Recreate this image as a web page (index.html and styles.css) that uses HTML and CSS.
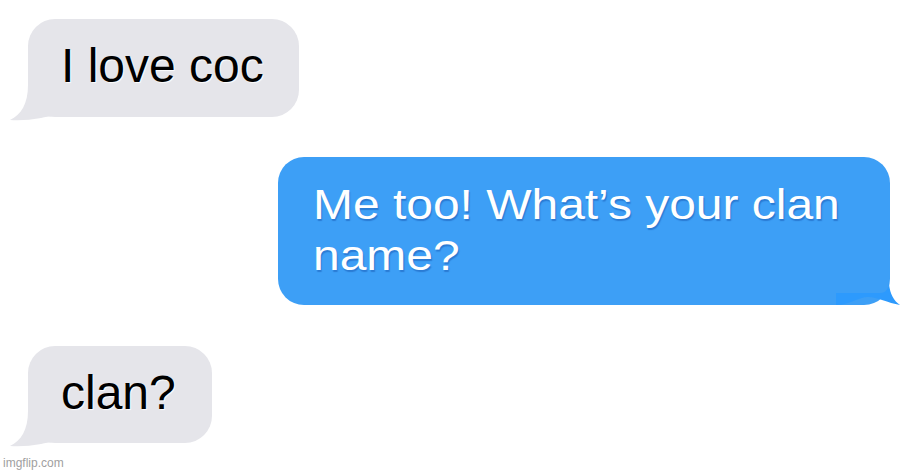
FILE: index.html
```html
<!DOCTYPE html>
<html>
<head>
<meta charset="utf-8">
<link rel="stylesheet" href="styles.css">
</head>
<body>
<div class="chat">
  <div class="bubble gray first">
    <span class="gtext">I love coc</span>
    <svg class="tail-left" width="55" height="42" viewBox="0 0 55 42"><path d="M23 5 C23 24 16 35 5 40 Q20 41 36 38 C40 37 44 36 50 36 L55 36 L55 5 Z" fill="#e5e5ea"/></svg>
  </div>
  <div class="bubble blue">
    <span class="btext">Me too! What’s your clan name?</span>
    <svg class="tail-right" width="70" height="40" viewBox="0 0 70 40"><path d="M6 35 L6 23 L50 23 Q59 23 59 10 L59 14 C60 24 64 31 70 35 C58 33 47 27 38 27 C29 27 19 35 6 35 Z" fill="#2d9afd"/></svg>
  </div>
  <div class="bubble gray third">
    <span class="gtext">clan?</span>
    <svg class="tail-left" width="55" height="42" viewBox="0 0 55 42"><path d="M23 5 C23 24 16 35 5 40 Q20 41 36 38 C40 37 44 36 50 36 L55 36 L55 5 Z" fill="#e5e5ea"/></svg>
  </div>
</div>
<div class="watermark">imgflip.com</div>
</body>
</html>
```

FILE: styles.css
```css
html, body {
  margin: 0;
  padding: 0;
  background: #ffffff;
}
body {
  width: 900px;
  height: 475px;
  position: relative;
  overflow: hidden;
  font-family: "Liberation Sans", Arial, sans-serif;
}
.chat {
  display: flex;
  flex-direction: column;
  align-items: flex-start;
  padding-top: 19px;
}
.bubble {
  position: relative;
  box-sizing: border-box;
  border-radius: 27px;
}
.gray {
  background: #e5e5ea;
  height: 98px;
  margin-left: 28px;
  padding: 21px 0 0 33px;
}
.first {
  width: 271px;
}
.third {
  width: 184px;
  height: 97px;
  margin-top: 41px;
}
.gtext {
  display: block;
  font-size: 48px;
  line-height: 52px;
  color: #000;
  text-shadow: 1px 1px 1px rgba(255, 255, 255, 0.95);
  white-space: nowrap;
}
.blue {
  background: #3d9ff6;
  width: 612px;
  height: 148px;
  margin-top: 40px;
  margin-left: 278px;
  padding: 22px 0 0 35px;
  border-radius: 26px;
}
.btext {
  display: block;
  width: 500px;
  font-size: 43px;
  line-height: 51px;
  color: #fff;
  transform: scaleX(1.115);
  transform-origin: left top;
  text-shadow: 1px 2px 1px rgba(20, 80, 170, 0.45);
}
.tail-left {
  position: absolute;
  left: -23px;
  bottom: -5px;
}
.tail-right {
  position: absolute;
  left: 552px;
  top: 113px;
}
.watermark {
  position: absolute;
  left: 3px;
  top: 456px;
  font-size: 12px;
  color: #a0a0a0;
  font-family: "Liberation Sans", Arial, sans-serif;
}
```
